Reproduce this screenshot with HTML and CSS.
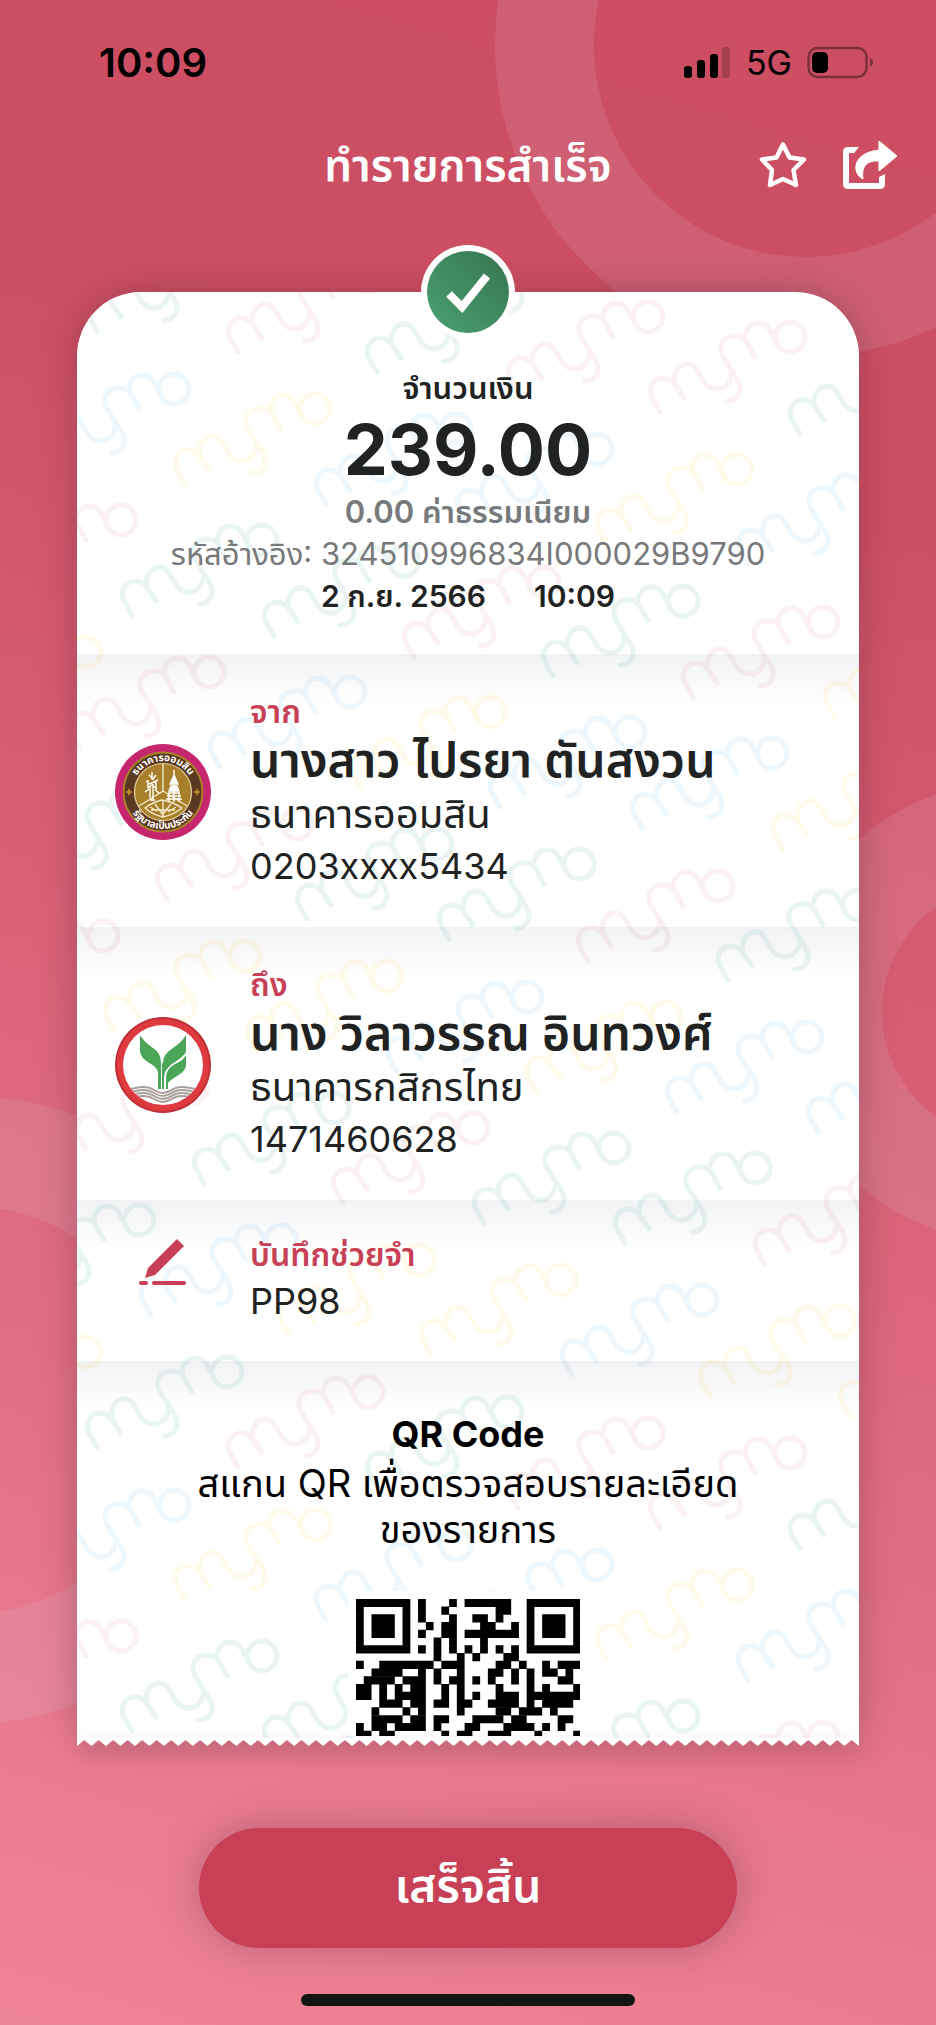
FILE: index.html
```
<!DOCTYPE html>
<html lang="th">
<head>
    <meta charset="UTF-8">
    <meta name="viewport" content="width=device-width, initial-scale=1.0">
    <title>ทำรายการสำเร็จ</title>
    <link rel="stylesheet" href="styles.css">
</head>
<body>
    <div class="screen">
        <div class="ring ring-top"></div>
        <div class="ring ring-right"></div>
        <div class="ring ring-left"></div>

        <div class="status-bar">
            <span class="clock">10:09</span>
            <div class="status-icons">
                <svg width="47" height="31" viewBox="0 0 47 31">
                    <rect x="0" y="19" width="8" height="12" rx="3"/>
                    <rect x="13" y="13" width="8" height="18" rx="3"/>
                    <rect x="26" y="7" width="8" height="24" rx="3"/>
                    <rect x="38" y="0" width="8" height="31" rx="3" opacity="0.2"/>
                </svg>
                <span class="network">5G</span>
                <svg width="67" height="33" viewBox="0 0 67 33">
                    <rect x="1.5" y="2" width="58" height="29" rx="9" fill="none" stroke="#000" stroke-width="2.4" opacity="0.4"/>
                    <rect x="5" y="6" width="16" height="21" rx="5"/>
                    <path d="M63 12c4 2 4 7 0 9z" opacity="0.4"/>
                </svg>
            </div>
        </div>

        <header class="header">
            <h1>ทำรายการสำเร็จ</h1>
            <div class="actions">
                <button type="button" aria-label="รายการโปรด">
                    <svg width="48" height="48" viewBox="0 0 48 48">
                        <path d="M24 3.500L30.500 16.500L45 18.500L34.500 29L37 44L24 38L11 44L13 29L3 18.500L17.500 16.500Z" fill="none" stroke="#fff" stroke-width="4.500" stroke-linejoin="round"/>
                    </svg>
                </button>
                <button type="button" aria-label="แชร์">
                    <svg width="56" height="50" viewBox="0 0 56 50">
                        <path d="M17 7H6Q1 7 1 12V44Q1 49 6 49H38Q43 49 43 44V34L37 37V43H7V13H12Z" fill="#fff"/>
                        <path d="M37 1L55 16L37 31V21C25 20 19 26 21 39C10 34 9 13 37 10Z" fill="#fff" stroke="#fff" stroke-linejoin="round"/>
                    </svg>
                </button>
            </div>
        </header>

        <main class="slip">
            <div class="paper">
                <svg class="watermark" width="936" height="1460" fill="none" stroke-width="5" stroke-linecap="round" stroke-linejoin="round">
                    <defs>
                        <g id="mymo">
                            <path d="M0 0L-7 -12C-14 -24 -6 -34 3 -34C10 -34 13 -30 16 -26L24 -14"/>
                            <path d="M14 -30C14 -42 20 -48 28 -48C35 -48 38 -40 42 -33C46 -26 51 -23 57 -23C66 -23 71 -31 72 -40"/>
                            <path d="M95 -55L89 -66C85 -74 82 -76 76 -76C64 -76 58 -68 62 -57L77 -33C84 -22 78 -11 67 -11"/>
                            <path d="M85 -72C84 -82 91 -90 99 -89C106 -89 109 -84 112 -78L118 -67"/>
                            <circle cx="130" cy="-75" r="15"/>
                        </g>
                    </defs>
                    <!-- origin is the top left corner of the paper -->
                    <g class="wm-green">
                        <use href="#mymo" x="20" y="39"/>
                        <use href="#mymo" x="300" y="80"/>
                        <use href="#mymo" x="723" y="142"/>
                        <use href="#mymo" x="55" y="323"/>
                        <use href="#mymo" x="197" y="344"/>
                        <use href="#mymo" x="476" y="384"/>
                        <use href="#mymo" x="-51" y="587"/>
                        <use href="#mymo" x="230" y="627"/>
                        <use href="#mymo" x="372" y="647"/>
                        <use href="#mymo" x="651" y="688"/>
                        <use href="#mymo" x="127" y="891"/>
                        <use href="#mymo" x="407" y="931"/>
                        <use href="#mymo" x="548" y="951"/>
                        <use href="#mymo" x="-68" y="1003"/>
                        <use href="#mymo" x="20" y="1155"/>
                        <use href="#mymo" x="300" y="1195"/>
                        <use href="#mymo" x="723" y="1257"/>
                        <use href="#mymo" x="55" y="1439"/>
                        <use href="#mymo" x="197" y="1459"/>
                        <use href="#mymo" x="476" y="1499"/>
                    </g>
                    <g class="wm-red">
                        <use href="#mymo" x="161" y="60"/>
                        <use href="#mymo" x="441" y="100"/>
                        <use href="#mymo" x="583" y="120"/>
                        <use href="#mymo" x="-86" y="303"/>
                        <use href="#mymo" x="337" y="365"/>
                        <use href="#mymo" x="616" y="405"/>
                        <use href="#mymo" x="2" y="455"/>
                        <use href="#mymo" x="90" y="607"/>
                        <use href="#mymo" x="511" y="669"/>
                        <use href="#mymo" x="-104" y="719"/>
                        <use href="#mymo" x="-15" y="871"/>
                        <use href="#mymo" x="266" y="911"/>
                        <use href="#mymo" x="688" y="972"/>
                        <use href="#mymo" x="161" y="1175"/>
                        <use href="#mymo" x="441" y="1216"/>
                        <use href="#mymo" x="583" y="1236"/>
                        <use href="#mymo" x="-86" y="1419"/>
                        <use href="#mymo" x="616" y="1520"/>
                    </g>
                    <g class="wm-blue">
                        <use href="#mymo" x="-33" y="172"/>
                        <use href="#mymo" x="249" y="212"/>
                        <use href="#mymo" x="390" y="232"/>
                        <use href="#mymo" x="671" y="272"/>
                        <use href="#mymo" x="143" y="475"/>
                        <use href="#mymo" x="423" y="515"/>
                        <use href="#mymo" x="565" y="536"/>
                        <use href="#mymo" x="320" y="780"/>
                        <use href="#mymo" x="600" y="820"/>
                        <use href="#mymo" x="741" y="840"/>
                        <use href="#mymo" x="74" y="1023"/>
                        <use href="#mymo" x="495" y="1083"/>
                        <use href="#mymo" x="-33" y="1288"/>
                        <use href="#mymo" x="249" y="1328"/>
                        <use href="#mymo" x="390" y="1348"/>
                        <use href="#mymo" x="671" y="1388"/>
                    </g>
                    <g class="wm-yellow">
                        <use href="#mymo" x="108" y="192"/>
                        <use href="#mymo" x="530" y="252"/>
                        <use href="#mymo" x="-121" y="435"/>
                        <use href="#mymo" x="283" y="495"/>
                        <use href="#mymo" x="758" y="425"/>
                        <use href="#mymo" x="706" y="557"/>
                        <use href="#mymo" x="38" y="739"/>
                        <use href="#mymo" x="180" y="759"/>
                        <use href="#mymo" x="459" y="800"/>
                        <use href="#mymo" x="-121" y="1135"/>
                        <use href="#mymo" x="212" y="1043"/>
                        <use href="#mymo" x="354" y="1063"/>
                        <use href="#mymo" x="633" y="1104"/>
                        <use href="#mymo" x="773" y="1124"/>
                        <use href="#mymo" x="108" y="1308"/>
                        <use href="#mymo" x="530" y="1368"/>
                    </g>
                </svg>

                <section class="summary">
                    <p class="amount-label">จำนวนเงิน</p>
                    <p class="amount">239.00</p>
                    <p class="fee">0.00 ค่าธรรมเนียม</p>
                    <p class="reference">รหัสอ้างอิง: 324510996834I000029B9790</p>
                    <p class="date"><span>2 ก.ย. 2566</span><span>10:09</span></p>
                </section>

                <section class="party">
                    <svg class="logo" width="96" height="96" viewBox="0 0 96 96">
                        <defs>
                            <path id="arc-top" d="M17 48A31 31 0 0 1 79 48"/>
                            <path id="arc-bottom" d="M11 48A37 37 0 0 0 85 48"/>
                        </defs>
                        <circle cx="48" cy="48" r="48" fill="#c6266e"/>
                        <circle cx="48" cy="48" r="39.500" fill="#5a3821" stroke="#a8802b" stroke-width="2"/>
                        <circle cx="48" cy="48" r="28.500" fill="#a8802b" stroke="#e5d29a" stroke-width="1.200"/>
                        <path d="M48 20V47L24 62M48 47L72 62" fill="none" stroke="#f3e8c8" stroke-width="1.400"/>
                        <path d="M59 26V32M59 31L63 40H55ZM56 42H62L64 47H54ZM53 49H65M52 52H66M51 55H67M54 49V58M64 49V58M59 41V58" fill="#fff" stroke="#fff" stroke-width="1.400"/>
                        <path d="M37 28V36M34 31L38 35L41 31M31 37L35 40L43 36M32 44L37 41L42 45M33 36V43M41 37V47M35 42V54M38 40V57M30 48L34 45M44 49L40 46M35 56H40" fill="none" stroke="#fff" stroke-width="1.400"/>
                        <path d="M30 64Q38 58 47 56Q58 58 67 64Q60 70 48 73Q38 71 30 64ZM35 63L42 67M40 60L48 71M48 57V73M56 60L48 70M61 63L53 68M36 66H60" fill="none" stroke="#f3e8c8" stroke-width="1.400"/>
                        <path d="M14 44l1.300 2.700L18 48l-2.700 1.300L14 52l-1.300-2.700L10 48l2.700-1.300ZM82 44l1.300 2.700L86 48l-2.700 1.300L82 52l-1.300-2.700L78 48l2.700-1.300Z" fill="#b68c34"/>
                        <text class="seal-text"><textPath href="#arc-top" startOffset="50%">ธนาคารออมสิน</textPath></text>
                        <text class="seal-text"><textPath href="#arc-bottom" startOffset="50%">รัฐบาลเป็นประกัน</textPath></text>
                    </svg>
                    <div class="details">
                        <h2>จาก</h2>
                        <p class="name">นางสาว ไปรยา ตันสงวน</p>
                        <p class="bank">ธนาคารออมสิน</p>
                        <p>0203xxxx5434</p>
                    </div>
                </section>

                <section class="party">
                    <svg class="logo" width="96" height="96" viewBox="0 0 96 96">
                        <defs>
                            <clipPath id="kbank-inner"><circle cx="48" cy="48" r="40"/></clipPath>
                        </defs>
                        <circle cx="48" cy="48" r="48" fill="#bd3036"/>
                        <circle cx="48" cy="48" r="46" fill="#de3a3f"/>
                        <circle cx="48" cy="48" r="40" fill="#fff"/>
                        <g clip-path="url(#kbank-inner)" fill="none" stroke="#a99f9a" stroke-width="2">
                            <path d="M4 73C18 73 20 70 29 70C39 70 40 76 48 76C56 76 57 70 66 70C76 70 78 73 92 73"/>
                            <path d="M4 76C18 76 20 73 29 73C39 73 40 79 48 79C56 79 57 73 66 73C76 73 78 76 92 76"/>
                            <path d="M4 79C18 79 20 76 29 76C39 76 40 82 48 82C56 82 57 76 66 76C76 76 78 79 92 79"/>
                            <path d="M4 82C18 82 20 79 29 79C39 79 40 85 48 85C56 85 57 79 66 79C76 79 78 82 92 82"/>
                        </g>
                        <path d="M25 18Q29 25 38 31Q46 36 46 46V72H43V57Q43 51 36 47Q25 41 25 34ZM71 18Q67 25 58 31Q48 37 48 46V72H49V61Q49 53 57 47Q71 38 71 34Z" fill="#4ba65a"/>
                        <path d="M47.500 46V72" stroke="#4ba65a" stroke-width="1"/>
                        <path d="M71 38Q69 43 60 47Q51 52 51 61V72H53V66Q54 64 62 59Q71 54 71 48Z" fill="#4ba65a"/>
                    </svg>
                    <div class="details">
                        <h2>ถึง</h2>
                        <p class="name">นาง วิลาวรรณ อินทวงศ์</p>
                        <p class="bank">ธนาคารกสิกรไทย</p>
                        <p>1471460628</p>
                    </div>
                </section>

                <section class="party memo">
                    <svg class="logo" width="96" height="54" viewBox="0 -4 96 54">
                        <path d="M62 0L69 7L40 36L30 39L33 29Z" fill="#c84055"/>
                        <rect x="24" y="42" width="9" height="4" rx="2" fill="#c84055"/>
                        <rect x="37" y="42" width="34" height="4" rx="2" fill="#c84055"/>
                    </svg>
                    <div class="details">
                        <h2>บันทึกช่วยจำ</h2>
                        <p>PP98</p>
                    </div>
                </section>

                <section class="qr">
                    <h2>QR Code</h2>
                    <p>สแกน QR เพื่อตรวจสอบรายละเอียดของรายการ</p>
                    <div class="qr-frame">
                        <svg class="qr-code" viewBox="0 0 29 17.700" stroke="#000" stroke-width="1.060">
                            <path d="M0 .5h7M8 .5h1M12 .5h1M14 .5h6M22 .5h7"/>
                            <path d="M0 1.500h1M6 1.500h1M8 1.500h1M11 1.500h1M18 1.500h2M22 1.500h1M28 1.500h1"/>
                            <path d="M0 2.500h1M2 2.500h3M6 2.500h1M8 2.500h1M12 2.500h1M15 2.500h2M18 2.500h1M22 2.500h1M24 2.500h3M28 2.500h1"/>
                            <path d="M0 3.500h1M2 3.500h3M6 3.500h1M9 3.500h1M11 3.500h2M16 3.500h2M20 3.500h1M22 3.500h1M24 3.500h3M28 3.500h1"/>
                            <path d="M0 4.500h1M2 4.500h3M6 4.500h1M8 4.500h1M11 4.500h2M14 4.500h7M22 4.500h1M24 4.500h3M28 4.500h1"/>
                            <path d="M0 5.500h1M6 5.500h1M10 5.500h1M12 5.500h1M16 5.500h1M22 5.500h1M28 5.500h1"/>
                            <path d="M0 6.500h7M8 6.500h1M10 6.500h1M12 6.500h1M14 6.500h1M16 6.500h1M18 6.500h1M20 6.500h1M22 6.500h7"/>
                            <path d="M10 7.500h1M13 7.500h1M15 7.500h1M19 7.500h2"/>
                            <path d="M0 8.500h1M3 8.500h7M11 8.500h3M18 8.500h2M21 8.500h1M24 8.500h1M26 8.500h3"/>
                            <path d="M2 9.500h4M8 9.500h1M10 9.500h1M13 9.500h1M17 9.500h2M20 9.500h1M22 9.500h1M24 9.500h2M27 9.500h1"/>
                            <path d="M1 10.500h4M6 10.500h3M10 10.500h1M12 10.500h2M15 10.500h1M17 10.500h1M20 10.500h1M22 10.500h1M26 10.500h2"/>
                            <path d="M0 11.500h2M3 11.500h1M5 11.500h1M7 11.500h2M11 11.500h1M13 11.500h1M18 11.500h1M22 11.500h1M24 11.500h1M28 11.500h1"/>
                            <path d="M0 12.500h2M3 12.500h1M5 12.500h4M11 12.500h1M13 12.500h1M15 12.500h1M18 12.500h3M22 12.500h7"/>
                            <path d="M3 13.500h3M7 13.500h1M8 13.500h1M10 13.500h2M13 13.500h2M17 13.500h4M22 13.500h1M24 13.500h4"/>
                            <path d="M2 14.500h1M6 14.500h1M8 14.500h1M13 14.500h1M18 14.500h2M21 14.500h3M25 14.500h1"/>
                            <path d="M2 15.500h4M7 15.500h2M10 15.500h2M15 15.500h4M20 15.500h2M26 15.500h2"/>
                            <path d="M0 16.500h1M2 16.500h2M5 16.500h4M10 16.500h1M14 16.500h2M19 16.500h4M24 16.500h1M26 16.500h1"/>
                            <path d="M0 17.500h2M3 17.500h2M11 17.500h1M13 17.500h2M17 17.500h3M23 17.500h1M28 17.500h1"/>
                        </svg>
                    </div>
                </section>
            </div>

            <svg class="torn-edge" width="100%" height="8">
                <defs>
                    <pattern id="teeth" width="14.480" height="8" patternUnits="userSpaceOnUse">
                        <path d="M0 0H14.480V8L7.240 2L0 8Z" fill="#fff"/>
                    </pattern>
                </defs>
                <rect width="100%" height="8" fill="url(#teeth)"/>
            </svg>

            <div class="badge">
                <svg width="82" height="82" viewBox="0 0 82 82">
                    <defs>
                        <linearGradient id="badge-fill" x1="0" y1="1" x2="1" y2="0">
                            <stop offset="0" stop-color="#4ba070"/>
                            <stop offset="1" stop-color="#357552"/>
                        </linearGradient>
                    </defs>
                    <circle cx="41" cy="41" r="41" fill="url(#badge-fill)"/>
                    <path d="M22 43L35 56L60 25" fill="none" stroke="#fff" stroke-width="8"/>
                </svg>
            </div>
        </main>

        <footer class="footer">
            <button type="button" class="done">เสร็จสิ้น</button>
            <div class="home-bar"></div>
        </footer>
    </div>
</body>
</html>
```
FILE: styles.css
```
* {
    box-sizing: border-box;
}
body {
    margin: 0;
    font-family: Inter, "Noto Sans Thai", "Noto Sans", sans-serif;
    color: #212222;
}
h1, h2, p {
    margin: 0;
}
button {
    border: 0;
    padding: 0;
    background: none;
    font-family: inherit;
    cursor: pointer;
}
svg {
    display: block;
}
.screen {
    position: relative;
    overflow: hidden;
    min-height: 100vh;
    background: linear-gradient(196deg, #cd4e63 0%, #cd4f64 24%, #ee8499 100%);
}

/* decorative circles */
.ring {
    position: absolute;
    border-radius: 50%;
    border: 99px solid rgba(218, 220, 235, 0.12);
}
.ring-top {
    width: 622px;
    height: 622px;
    top: -266px;
    right: -181px;
}
.ring-right {
    width: 460px;
    height: 460px;
    top: 782px;
    right: -305px;
    border-width: 101px;
}
.ring-left {
    width: 628px;
    height: 628px;
    top: 1096px;
    left: -347px;
    border-width: 110px;
}

.status-bar {
    position: relative;
    display: flex;
    justify-content: space-between;
    align-items: center;
    height: 124px;
    padding: 0 62px 0 99px;
    color: #000;
}
.clock {
    font-size: 40px;
    font-weight: 600;
}
.status-icons {
    display: flex;
    align-items: center;
    gap: 15px;
}
.network {
    font-size: 34px;
}

.header {
    position: relative;
    display: flex;
    justify-content: center;
    align-items: center;
    height: 82px;
    color: #fff;
}
.header h1 {
    font-size: 44px;
    font-weight: 600;
    line-height: 60px;
}
.actions {
    position: absolute;
    right: 38px;
    display: flex;
    align-items: center;
    gap: 35px;
}

.slip {
    position: relative;
    margin: 86px 77px 0;
}
.paper {
    position: relative;
    overflow: hidden;
    background: #fff;
    border-radius: 64px 64px 0 0;
    box-shadow: 0 0 36px rgba(80, 40, 50, 0.35);
}
.watermark {
    position: absolute;
    top: 0;
    left: 0;
}
.wm-green { stroke: #eaf5f3; }
.wm-red { stroke: #fbf1f3; }
.wm-blue { stroke: #eef7fd; }
.wm-yellow { stroke: #fffaea; }

.paper section {
    position: relative;
}
.summary {
    padding: 75px 20px 37px;
    text-align: center;
    font-size: 31px;
    line-height: 42px;
}
.amount-label, .date {
    font-weight: 600;
}
.amount {
    font-size: 70px;
    font-weight: 700;
    line-height: 82px;
}
.fee {
    color: #77797a;
    font-weight: 600;
}
.reference {
    color: #77797a;
}
.date {
    display: flex;
    justify-content: center;
    gap: 48px;
    font-size: 30px;
}

.party {
    display: flex;
    align-items: center;
    gap: 39px;
    padding: 38px 38px 35px;
    background: linear-gradient(rgba(60, 70, 100, 0.07), rgba(60, 70, 100, 0) 50px);
    font-size: 36px;
    line-height: 52px;
}
.details h2 {
    color: #c84055;
    font-size: 32px;
    font-weight: 600;
    line-height: 40px;
}
.details .name {
    font-size: 48px;
    font-weight: 600;
    line-height: 56px;
}
.details .bank {
    font-size: 40px;
}
.seal-text {
    font-size: 10px;
    font-weight: 700;
    text-anchor: middle;
    fill: #fff;
}
.memo {
    align-items: flex-start;
    padding: 35px 38px 34px;
}

.qr {
    padding: 47px 100px 2px;
    background: linear-gradient(rgba(60, 70, 100, 0.07), rgba(60, 70, 100, 0) 50px);
    color: #000;
    text-align: center;
    font-size: 38px;
    line-height: 46px;
}
.qr h2 {
    font-size: 36px;
    font-weight: 700;
    line-height: 52px;
}
.qr-frame {
    width: 241px;
    margin: 39px auto 0;
    padding: 8px 8px 0;
    background: #fff;
}
.torn-edge {
    position: relative;
    filter: drop-shadow(0 8px 8px rgba(120, 50, 70, 0.3));
}
.badge {
    position: absolute;
    top: -47px;
    left: 50%;
    margin-left: -47px;
    padding: 6px;
    border-radius: 50%;
    background: #fff;
}

.footer {
    position: relative;
    display: flex;
    flex-direction: column;
    align-items: center;
    gap: 46px;
    padding: 82px 77px 16px;
}
.done {
    width: 538px;
    max-width: 100%;
    height: 120px;
    border-radius: 60px;
    background: #c84055;
    box-shadow: 0 0 40px rgba(100, 50, 70, 0.35);
    color: #fff;
    font-size: 46px;
    font-weight: 600;
}
.home-bar {
    width: 334px;
    height: 12px;
    border-radius: 6px;
    background: #151515;
}
```
